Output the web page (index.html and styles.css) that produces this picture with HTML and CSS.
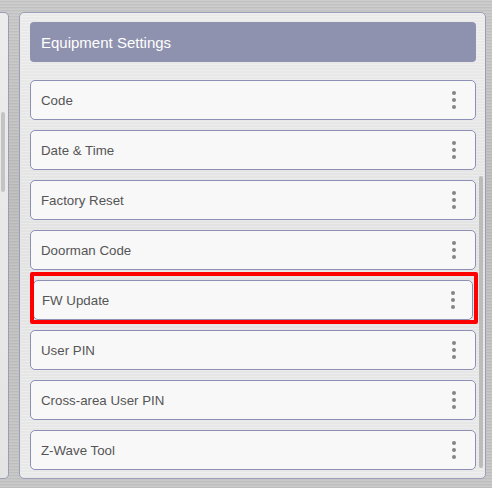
FILE: index.html
```html
<!DOCTYPE html>
<html>
<head>
<meta charset="utf-8">
<link rel="stylesheet" href="styles.css">
</head>
<body>
<div class="screen">
  <div class="side-panel"><div class="side-thumb"></div></div>
  <div class="main-panel">
    <div class="header">Equipment Settings</div>
    <div class="list">
      <div class="item"><span>Code</span><span class="more"><i></i><i></i><i></i></span></div>
      <div class="item"><span>Date &amp; Time</span><span class="more"><i></i><i></i><i></i></span></div>
      <div class="item"><span>Factory Reset</span><span class="more"><i></i><i></i><i></i></span></div>
      <div class="item"><span>Doorman Code</span><span class="more"><i></i><i></i><i></i></span></div>
      <div class="item item-highlight"><span>FW Update</span><span class="more"><i></i><i></i><i></i></span><div class="highlight"></div></div>
      <div class="item"><span>User PIN</span><span class="more"><i></i><i></i><i></i></span></div>
      <div class="item"><span>Cross-area User PIN</span><span class="more"><i></i><i></i><i></i></span></div>
      <div class="item"><span>Z-Wave Tool</span><span class="more"><i></i><i></i><i></i></span></div>
    </div>
    <div class="scroll-thumb"></div>
  </div>
</div>
</body>
</html>
```
FILE: styles.css
```css
html, body {
  margin: 0;
  padding: 0;
}
body {
  width: 492px;
  height: 488px;
  overflow: hidden;
  font-family: "Liberation Sans", Arial, sans-serif;
  background-color: #c2c2c2;
  background-image: repeating-linear-gradient(180deg, rgba(255,255,255,0.08) 0 1px, rgba(0,0,0,0.04) 1px 2px, rgba(255,255,255,0) 2px 3px),
    linear-gradient(180deg, #c9c9c9 0%, #bdbdbd 40%, #c6c6c6 100%);
}
.screen {
  display: flex;
  gap: 10px;
  padding-top: 12px;
  height: 467px;
}
.side-panel {
  position: relative;
  width: 9px;
  height: 467px;
  box-sizing: border-box;
  border: 1px solid #9a9db8;
  border-left: none;
  border-radius: 0 5px 5px 0;
  background: linear-gradient(180deg, #ececec, #e4e4e4);
}
.side-thumb {
  position: absolute;
  left: 1px;
  top: 99px;
  width: 4px;
  height: 80px;
  border-radius: 2px;
  background: #c4c4c4;
}
.main-panel {
  position: relative;
  width: 467px;
  height: 467px;
  box-sizing: border-box;
  border: 1px solid #9a9db8;
  border-radius: 5px;
  background-color: #ebebeb;
  background-image: repeating-linear-gradient(180deg, rgba(255,255,255,0.12) 0 1px, rgba(0,0,0,0.015) 1px 3px),
    linear-gradient(180deg, #eeeeee, #e6e6e6 50%, #ececec);
  padding: 9px 9px 0 10px;
  display: flex;
  flex-direction: column;
  overflow: hidden;
}
.header {
  height: 40px;
  flex: none;
  background: #8e92ae;
  border-radius: 4px;
  color: #ffffff;
  font-size: 15px;
  display: flex;
  align-items: center;
  padding-left: 11px;
}
.list {
  margin-top: 18px;
  display: flex;
  flex-direction: column;
  gap: 10px;
}
.item {
  position: relative;
  height: 40px;
  box-sizing: border-box;
  border: 1px solid #8c90b4;
  border-radius: 5px;
  background: #f8f8f8;
  display: flex;
  align-items: center;
  justify-content: space-between;
  padding: 0 19px 0 10px;
  color: #555555;
  font-size: 13.3px;
}
.item-highlight {
  margin: 0 3px;
  padding: 0 17px 0 8px;
}
.more {
  display: flex;
  flex-direction: column;
  gap: 3px;
}
.more i {
  display: block;
  width: 4px;
  height: 4px;
  border-radius: 50%;
  background: #858585;
}
.highlight {
  position: absolute;
  left: -4px;
  right: -6px;
  top: -9px;
  bottom: -5px;
  border: 4px solid #ff0000;
  border-radius: 2px;
}
.scroll-thumb {
  position: absolute;
  left: 459px;
  top: 163px;
  width: 4px;
  height: 292px;
  border-radius: 2px;
  background: #bcbcbc;
}
```
